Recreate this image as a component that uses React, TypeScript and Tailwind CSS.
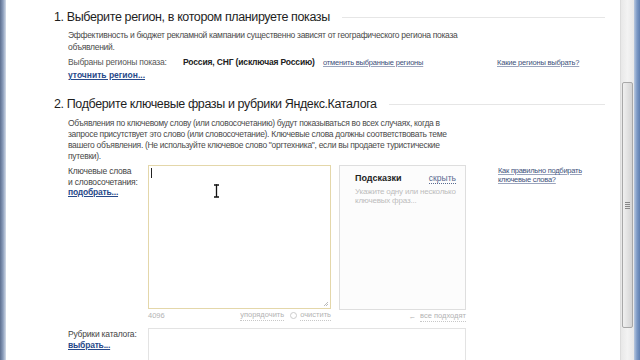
import React from "react";

const font = { fontFamily: '"Liberation Sans", Arial, sans-serif' };

function Heading({ children }: { children: React.ReactNode }) {
  return (
    <div className="flex items-center gap-3 pr-[15px]">
      <h2 className="text-[12.5px] leading-[16px] tracking-[-0.38px] text-[#1e1e1e] whitespace-nowrap">{children}</h2>
      <div className="flex-1 border-t border-[#e6e6e6]" />
    </div>
  );
}

function TextCursor() {
  return (
    <svg width="7" height="14" viewBox="0 0 7 14" className="absolute left-[64px] top-[18px]">
      <path d="M1 1h2l0.5 0.5L4 1h2M3.5 1.5v11M1 13h2l0.5-0.5L4 13h2" stroke="#111" strokeWidth="1.3" fill="none" />
    </svg>
  );
}

export default function App() {
  return (
    <div className="flex h-[360px] w-[640px] overflow-hidden bg-white" style={font}>
      {/* left window frame */}
      <div className="w-[6px] bg-gradient-to-r from-[#5d6f8f] via-[#8a9cba] to-[#d5dde9]" />

      <div className="flex-1 pl-[48px] pt-[9px] text-[#444]">
        {/* section 1 */}
        <Heading>1. Выберите регион, в котором планируете показы</Heading>
        <div className="pl-[14px] mt-[4px]">
          <p className="text-[8.5px] leading-[12px] tracking-[-0.3px] text-[#4a4a4a] whitespace-nowrap">
            Эффективность и бюджет рекламной кампании существенно зависят от географического региона показа
            <br />
            объявлений.
          </p>
          <div className="flex items-baseline mt-[3px] text-[8.5px] leading-[12px]">
            <span className="w-[115px] text-[#555] tracking-[-0.2px]">Выбраны регионы показа:</span>
            <span className="w-[140px] font-bold text-[#222] tracking-[-0.15px]">Россия, СНГ (исключая Россию)</span>
            <a className="w-[174px] text-[7.5px] tracking-[-0.2px] text-[#40507a] underline decoration-[#9aa4bd]">
              отменить выбранные регионы
            </a>
            <a className="text-[7.5px] tracking-[-0.2px] text-[#40507a] underline decoration-[#9aa4bd]">
              Какие регионы выбрать?
            </a>
          </div>
          <a className="block text-[8.5px] leading-[12px] font-bold text-[#284a8a] underline">уточнить регион...</a>
        </div>

        {/* section 2 */}
        <div className="mt-[15px]">
          <Heading>2. Подберите ключевые фразы и рубрики Яндекс.Каталога</Heading>
        </div>
        <div className="pl-[14px] mt-[6px]">
          <p className="text-[8.5px] leading-[11px] tracking-[-0.3px] text-[#4a4a4a] whitespace-nowrap">
            Объявления по ключевому слову (или словосочетанию) будут показываться во всех случаях, когда в
            <br />
            запросе присутствует это слово (или словосочетание). Ключевые слова должны соответствовать теме
            <br />
            вашего объявления. (Не используйте ключевое слово "оргтехника", если вы продаете туристические
            <br />
            путевки).
          </p>

          <div className="flex mt-[3px]">
            <div className="w-[80px] pt-[1px] text-[8.5px] leading-[10.5px] tracking-[-0.2px] text-[#444]">
              <div>Ключевые слова</div>
              <div>и словосочетания:</div>
              <a className="font-bold text-[#284a8a] underline">подобрать...</a>
            </div>

            <div className="w-[183px]">
              <div className="relative h-[144px] border border-[#e4d7aa] bg-white">
                <div className="absolute left-[2px] top-[2px] h-[10px] w-px bg-[#222]" />
                <TextCursor />
                <svg width="6" height="6" viewBox="0 0 6 6" className="absolute right-[1px] bottom-[1px]">
                  <path d="M5 1L1 5M5 3L3 5" stroke="#aaa" strokeWidth="0.8" />
                </svg>
              </div>
              <div className="flex items-center mt-[1px] text-[7.5px] leading-[10px] text-[#b3b3b3]">
                <span>4096</span>
                <span className="ml-auto border-b border-dotted border-[#c8c8c8]">упорядочить</span>
                <span className="ml-[6px] h-[7px] w-[7px] rounded-full border border-[#ccc]" />
                <span className="ml-[3px] border-b border-dotted border-[#c8c8c8]">очистить</span>
              </div>
            </div>

            <div className="ml-[8px] w-[127px]">
              <div className="h-[145px] border border-[#dedede] bg-[#fcfcfc] pl-[15px] pr-[9px] pt-[6px]">
                <div className="flex items-baseline">
                  <span className="text-[9px] font-bold text-[#222]">Подсказки</span>
                  <span className="ml-auto text-[8.5px] text-[#5a6a90] border-b border-dotted border-[#5a6a90] leading-[10px]">
                    скрыть
                  </span>
                </div>
                <p className="mt-[1px] text-[8px] leading-[9.5px] tracking-[-0.2px] text-[#bdbdbd] whitespace-nowrap">
                  Укажите одну или несколько
                  <br />
                  ключевых фраз...
                </p>
              </div>
              <div className="flex justify-end items-center mt-[1px] text-[7.5px] leading-[10px] text-[#b3b3b3]">
                <span className="mr-[4px]">←</span>
                <span className="border-b border-dotted border-[#c8c8c8]">все подходят</span>
              </div>
            </div>

            <div className="ml-[32px] pt-[1px]">
              <a className="block whitespace-nowrap text-[7.5px] leading-[9px] tracking-[-0.25px] text-[#40507a] underline decoration-[#9aa4bd]">
                Как правильно подбирать
                <br />
                ключевые слова?
              </a>
            </div>
          </div>

          <div className="flex mt-[6px]">
            <div className="w-[80px] pt-[1px] text-[8.5px] leading-[10.5px] tracking-[-0.2px] text-[#444]">
              <div>Рубрики каталога:</div>
              <a className="font-bold text-[#284a8a] underline">выбрать...</a>
            </div>
            <div className="w-[318px] h-[40px] border border-[#e3e3e3] bg-white" />
          </div>
        </div>
      </div>

      {/* scrollbar */}
      <div className="flex w-[14px] flex-col bg-gradient-to-r from-[#e8e8e8] via-[#f3f3f3] to-[#e8e8e8] border-l border-[#dcdcdc]">
        <div className="h-[82px]" />
        <div className="mx-[1px] flex h-[246px] items-center justify-center rounded-[2px] border border-[#a8a8a8] bg-gradient-to-r from-[#f0f0f0] via-[#e2e2e2] to-[#d4d4d4]">
          <div className="flex flex-col gap-[1px]">
            <div className="h-px w-[5px] bg-[#888]" />
            <div className="h-px w-[5px] bg-[#888]" />
            <div className="h-px w-[5px] bg-[#888]" />
            <div className="h-px w-[5px] bg-[#888]" />
          </div>
        </div>
      </div>

      {/* right window frame */}
      <div className="w-[6px] bg-gradient-to-r from-[#b9c9e0] via-[#7d9ac6] to-[#5f7fb0]" />
    </div>
  );
}
